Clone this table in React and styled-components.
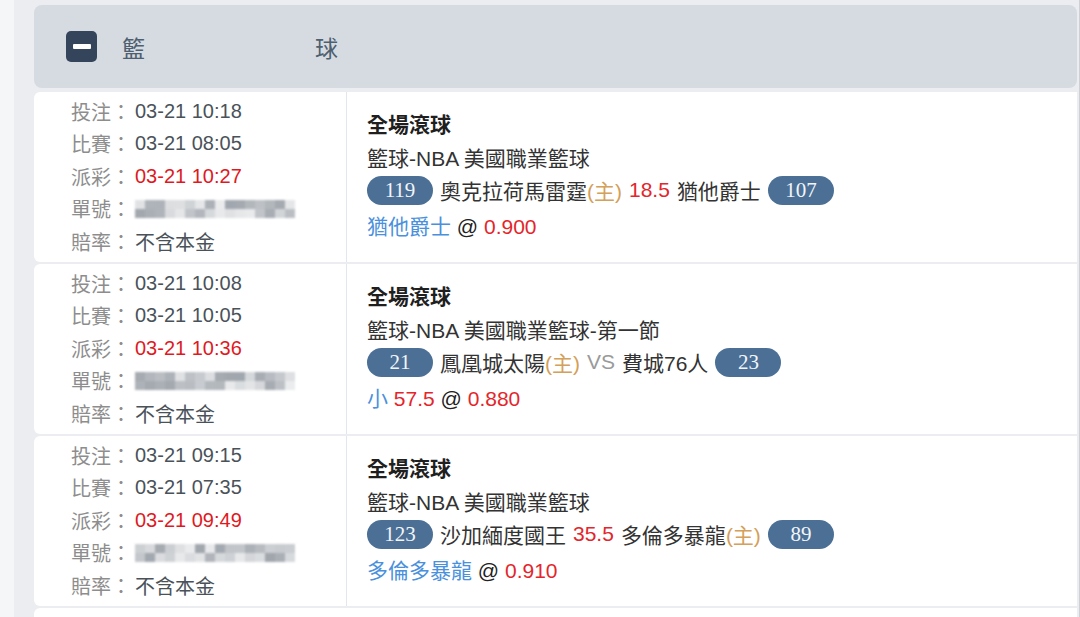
import React from 'react';
import styled, { createGlobalStyle } from 'styled-components';

const GlobalStyle = createGlobalStyle`
  html, body {
    margin: 0;
    padding: 0;
    background: #f5f6f8;
    font-family: "Liberation Sans", "Noto Sans CJK TC", sans-serif;
  }
`;

const bets = [
  {
    placed: '03-21 10:18',
    match: '03-21 08:05',
    settled: '03-21 10:27',
    seed: 3,
    type: '全場滾球',
    league: '籃球-NBA 美國職業籃球',
    home: { name: '奧克拉荷馬雷霆', score: 119, host: true },
    mid: { text: '18.5', red: true },
    away: { name: '猶他爵士', score: 107 },
    pick: '猶他爵士',
    line: null,
    odds: '0.900',
  },
  {
    placed: '03-21 10:08',
    match: '03-21 10:05',
    settled: '03-21 10:36',
    seed: 7,
    type: '全場滾球',
    league: '籃球-NBA 美國職業籃球-第一節',
    home: { name: '鳳凰城太陽', score: 21, host: true },
    mid: { text: 'VS', red: false },
    away: { name: '費城76人', score: 23 },
    pick: '小',
    line: '57.5',
    odds: '0.880',
  },
  {
    placed: '03-21 09:15',
    match: '03-21 07:35',
    settled: '03-21 09:49',
    seed: 11,
    type: '全場滾球',
    league: '籃球-NBA 美國職業籃球',
    home: { name: '沙加緬度國王', score: 123 },
    mid: { text: '35.5', red: true },
    away: { name: '多倫多暴龍', score: 89, host: true },
    pick: '多倫多暴龍',
    line: null,
    odds: '0.910',
  },
];

const Panel = styled.div`
  margin-left: 14px;
  padding: 5px 2px 0 20px;
  background: #ebedf0;
  border-right: 1px solid #cdd1d7;
  height: 612px;
  overflow: hidden;
`;

const Header = styled.div`
  display: flex;
  align-items: center;
  gap: 25px;
  height: 83px;
  padding-left: 32px;
  background: #d6dbe2;
  border-radius: 8px;
  margin-bottom: 4px;
`;

const Toggle = styled.span`
  display: flex;
  align-items: center;
  justify-content: center;
  width: 31px;
  height: 31px;
  border-radius: 5px;
  background: #34445a;

  &::after {
    content: '';
    width: 18px;
    height: 5px;
    border-radius: 1px;
    background: #fff;
  }
`;

const Title = styled.div`
  display: flex;
  justify-content: space-between;
  width: 216px;
  font-size: 23px;
  color: #4e5f70;
`;

const List = styled.div`
  display: flex;
  flex-direction: column;
  gap: 2px;
`;

const Row = styled.div`
  display: flex;
  height: 170px;
  flex-shrink: 0;
  background: #fff;
  border-radius: 6px 0 0 6px;
`;

const Meta = styled.div`
  width: 275px;
  padding: 3px 0 0 37px;
  border-right: 1px solid #e3e6ea;
  font-size: 20px;
`;

const MetaLine = styled.div`
  display: flex;
  align-items: center;
  height: 32.5px;
`;

const Label = styled.span`
  width: 64px;
  color: #8d8d8d;
`;

const Value = styled.span`
  color: ${p => (p.$red ? '#e0191e' : '#4a5259')};
`;

const Mosaic = styled.span`
  display: grid;
  grid-template-columns: repeat(16, 10px);
  grid-template-rows: repeat(2, 9px);
  filter: blur(0.8px);
`;

const Cell = styled.span`
  background: ${p => `rgba(120, 128, 138, ${p.$shade})`};
`;

const Detail = styled.div`
  flex: 1;
  padding: 16px 0 0 20px;
  font-size: 21px;
  color: #333;
`;

const BetType = styled.div`
  line-height: 34px;
  font-weight: bold;
  color: #1f1f1f;
`;

const League = styled.div`
  line-height: 34px;
`;

const Teams = styled.div`
  display: flex;
  align-items: center;
  gap: 7px;
  height: 28px;
  margin-bottom: 6px;
`;

const Score = styled.span`
  display: flex;
  align-items: center;
  justify-content: center;
  width: 66px;
  height: 29px;
  border-radius: 15px;
  background: #4b6f95;
  color: #f2f5f9;
  font-family: "Liberation Serif", serif;
  font-size: 21px;
`;

const Host = styled.span`
  color: #d4a05a;
`;

const Mid = styled.span`
  color: ${p => (p.$red ? '#e3262b' : '#9a9a9a')};
`;

const Pick = styled.div`
  line-height: 34px;
  color: #222;
`;

const PickName = styled.span`
  color: #4a90dc;
`;

const Red = styled.span`
  color: #e3262b;
`;

const shades = seed =>
  Array.from({ length: 32 }, (_, i) => {
    const v = Math.sin(seed * 97 + i * 13.7) * 10000;
    return 0.15 + (v - Math.floor(v)) * 0.55;
  });

const OrderNo = ({ seed }) => (
  <Mosaic>
    {shades(seed).map((s, i) => (
      <Cell key={i} $shade={s} />
    ))}
  </Mosaic>
);

const TeamName = ({ team }) => (
  <span>
    {team.name}
    {team.host && <Host>(主)</Host>}
  </span>
);

const BetRow = ({ bet }) => (
  <Row>
    <Meta>
      <MetaLine>
        <Label>投注：</Label>
        <Value>{bet.placed}</Value>
      </MetaLine>
      <MetaLine>
        <Label>比賽：</Label>
        <Value>{bet.match}</Value>
      </MetaLine>
      <MetaLine>
        <Label>派彩：</Label>
        <Value $red>{bet.settled}</Value>
      </MetaLine>
      <MetaLine>
        <Label>單號：</Label>
        <OrderNo seed={bet.seed} />
      </MetaLine>
      <MetaLine>
        <Label>賠率：</Label>
        <Value>不含本金</Value>
      </MetaLine>
    </Meta>
    <Detail>
      <BetType>{bet.type}</BetType>
      <League>{bet.league}</League>
      <Teams>
        <Score>{bet.home.score}</Score>
        <TeamName team={bet.home} />
        <Mid $red={bet.mid.red}>{bet.mid.text}</Mid>
        <TeamName team={bet.away} />
        <Score>{bet.away.score}</Score>
      </Teams>
      <Pick>
        <PickName>{bet.pick}</PickName>{' '}
        {bet.line && (
          <>
            <Red>{bet.line}</Red>{' '}
          </>
        )}
        @ <Red>{bet.odds}</Red>
      </Pick>
    </Detail>
  </Row>
);

export default function App() {
  return (
    <>
      <GlobalStyle />
      <Panel>
        <Header>
          <Toggle />
          <Title>
            <span>籃</span>
            <span>球</span>
          </Title>
        </Header>
        <List>
          {bets.map((bet, i) => (
            <BetRow key={i} bet={bet} />
          ))}
          <Row />
        </List>
      </Panel>
    </>
  );
}
